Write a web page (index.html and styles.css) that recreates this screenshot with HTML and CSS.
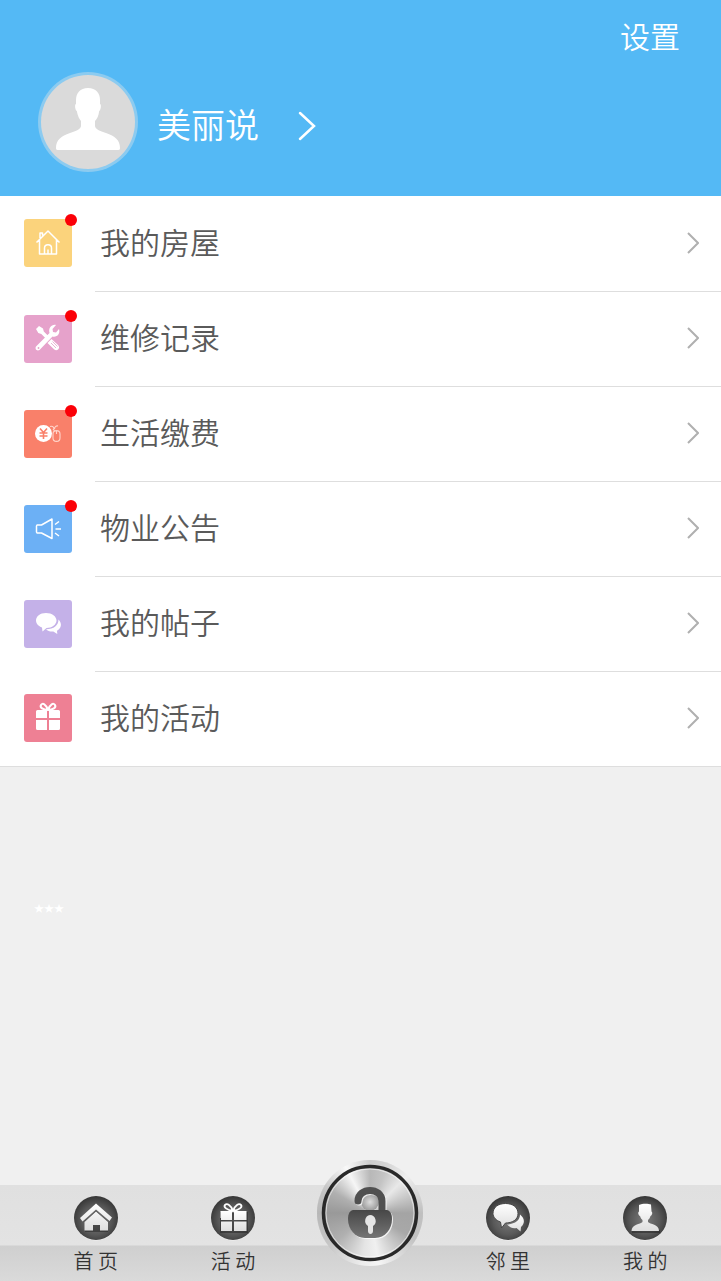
FILE: index.html
```html
<!DOCTYPE html>
<html lang="zh-CN">
<head>
<meta charset="UTF-8" />
<meta name="viewport" content="width=device-width, initial-scale=1" />
<title>我的</title>
<link rel="stylesheet" href="styles.css">
</head>
<body>
  <header class="header">
    <a class="settings" href="#settings">设置</a>
    <a class="profile" href="#profile">
      <svg class="avatar" viewBox="0 0 100 100" aria-hidden="true">
        <circle cx="50" cy="50" r="50" fill="#8ccbf0" />
        <circle cx="50" cy="50" r="47" fill="#dadada" />
        <path fill="#fff" d="M50 16c-8 0-12 5-12 12v4c-1.500 0-1 6 .8 7 1 5 2.500 8 4.200 10v5c0 3-5 5-11 7-9 3-14 7-14 15 0 2 1 2 3 2h58c2 0 3 0 3-2 0-8-5-12-14-15-6-2-11-4-11-7v-5c2-2 3.500-5 4.200-10 1.800-1 2.300-7 .8-7v-4c0-7-4-12-12-12z" />
      </svg>
      <span class="name">美丽说</span>
      <svg class="name-arrow" viewBox="0 0 18 30" aria-hidden="true"><path d="M2 2l14 13L2 28" /></svg>
    </a>
  </header>

  <main>
    <ul class="menu">
      <li>
        <a href="#house">
          <span class="icon yellow">
            <svg viewBox="0 0 48 48" aria-hidden="true"><path class="line" d="M12.500 23.500L24 12l11.500 11.500M15.500 21v14h17V21M16 19v-5h2.500v2.500M20.500 35v-6c0-4.500 7-4.500 7 0v6M24 34.500v-4" /></svg>
            <i class="dot"></i>
          </span>
          <span class="text">我的房屋</span>
          <svg class="arrow" viewBox="0 0 12 22" aria-hidden="true"><path d="M1 1l10 10L1 21" /></svg>
        </a>
      </li>
      <li>
        <a href="#repair">
          <span class="icon pink">
            <svg viewBox="0 0 48 48" aria-hidden="true">
              <path fill="#fff" d="M12 14l3-3 4 2.500.8 3 5 5-2.500 2.500-5-5-3-1z" />
              <path fill="#fff" d="M32 10l-3.500 4 .5 3 3 .5 3-3.500c1.500 5-2 8.500-6.500 7.500L15.500 35c-2.500 1.500-5-1-3.500-3.500L25.500 18C24 13.500 27.500 9 32 10z" />
              <path fill="#fff" d="M27.500 24l6.500 6c3 3-1 7-4 4.200l-6.500-6.200z" />
              <path stroke="#e6a2cb" d="M27 28l5 5M28.500 26.500l5 5" stroke-width=".8" />
              <circle cx="14.500" cy="33" r=".9" fill="#e6a2cb" />
            </svg>
            <i class="dot"></i>
          </span>
          <span class="text">维修记录</span>
          <svg class="arrow" viewBox="0 0 12 22" aria-hidden="true"><path d="M1 1l10 10L1 21" /></svg>
        </a>
      </li>
      <li>
        <a href="#payment">
          <span class="icon orange">
            <svg viewBox="0 0 48 48" aria-hidden="true">
              <circle cx="19.500" cy="23.500" r="8.500" fill="#fff" />
              <path d="M16 18.500l3.500 4 3.500-4M15.500 23h8M15.500 26h8M19.500 22.500v6.500" fill="none" stroke="#f9806a" stroke-width="1.600" />
              <path d="M26 16.500c3-1 4 1 4 3M30.500 19c0-2.500 2-3.500 3.500-3M29 24c0-4.500 7-4.500 7 0v4c0 4.500-7 4.500-7 0zM32.500 20.500v3.500M29 19l1.500 2" fill="none" stroke="#ffd5cc" stroke-width="1.100" />
            </svg>
            <i class="dot"></i>
          </span>
          <span class="text">生活缴费</span>
          <svg class="arrow" viewBox="0 0 12 22" aria-hidden="true"><path d="M1 1l10 10L1 21" /></svg>
        </a>
      </li>
      <li>
        <a href="#notice">
          <span class="icon blue">
            <svg viewBox="0 0 48 48" aria-hidden="true"><path class="line" d="M13 20h4.500L28 14v19.500L17.500 28H13l-.5-1v-6zM31 19.500l4-3M31.500 24H37M31 28l4 3" /></svg>
            <i class="dot"></i>
          </span>
          <span class="text">物业公告</span>
          <svg class="arrow" viewBox="0 0 12 22" aria-hidden="true"><path d="M1 1l10 10L1 21" /></svg>
        </a>
      </li>
      <li>
        <a href="#posts">
          <span class="icon purple">
            <svg viewBox="0 0 48 48" aria-hidden="true">
              <path fill="#fff" d="M34.500 19.500c4 4 2.800 9-1.500 11.200l.3 3.300-4-2.500c-3 .3-5.500-.5-7.300-2.300 8 0 12.500-4 12.500-9.700z" />
              <path fill="#fff" d="M22 13c6 0 10.500 3.500 10.500 7.500S28 28 22.500 28l-4 3.500-.5-4c-3.500-1.200-6-4-6-7C12 16.500 16 13 22 13z" />
            </svg>
          </span>
          <span class="text">我的帖子</span>
          <svg class="arrow" viewBox="0 0 12 22" aria-hidden="true"><path d="M1 1l10 10L1 21" /></svg>
        </a>
      </li>
      <li>
        <a href="#activity">
          <span class="icon red">
            <svg viewBox="0 0 48 48" aria-hidden="true">
              <path fill="#fff" d="M13.500 16H23v8H12v-6.500q0-1.500 1.500-1.500zM25 16h9.500q1.500 0 1.500 1.500V24H25zM12 26h11v10h-9.500q-1.500 0-1.500-1.500zM25 26h11v8.500q0 1.500-1.500 1.500H25z" />
              <path fill="none" stroke="#fff" stroke-width="2" d="M24 16c-2-6-5.500-7.500-7-5s2 5 7 5zM24 16c2-6 5.500-7.500 7-5s-2 5-7 5z" />
            </svg>
          </span>
          <span class="text">我的活动</span>
          <svg class="arrow" viewBox="0 0 12 22" aria-hidden="true"><path d="M1 1l10 10L1 21" /></svg>
        </a>
      </li>
    </ul>
    <p class="stars">★★★</p>
  </main>

  <svg class="defs" width="0" height="0" aria-hidden="true">
    <defs>
      <radialGradient id="disc" cx=".5" cy=".55" r=".55">
        <stop offset="0" stop-color="#7b7b7b" />
        <stop offset=".6" stop-color="#595959" />
        <stop offset="1" stop-color="#353535" />
      </radialGradient>
      <linearGradient id="glyph" x1="0" y1="0" x2="0" y2="1">
        <stop offset="0" stop-color="#fff" />
        <stop offset="1" stop-color="#dedede" />
      </linearGradient>
      <linearGradient id="lock" x1="0" y1="0" x2="0" y2="1">
        <stop offset="0" stop-color="#474747" />
        <stop offset="1" stop-color="#757575" />
      </linearGradient>
      <radialGradient id="hole" cx=".5" cy=".5" r=".5">
        <stop offset="0" stop-color="#ddd" />
        <stop offset="1" stop-color="#999" />
      </radialGradient>
    </defs>
  </svg>

  <nav class="tabbar">
    <a class="tab" href="#home">
      <svg viewBox="0 0 46 46" aria-hidden="true">
        <circle cx="23" cy="23.500" r="22" fill="#f6f6f6" />
        <circle cx="23" cy="23" r="22" fill="url(#disc)" />
        <path fill="#222" d="M12 37V26l11-10 12 11v10z" opacity=".5" />
        <path fill="url(#glyph)" d="M23 8.500L39 22.500 36.500 26 23 14.500 9.500 26.500 7 23zM23 16.500l12 10.500v8.500h-8V30h-7v5.500h-8.500V27z" />
      </svg>
      <span>首 页</span>
    </a>
    <a class="tab" href="#events">
      <svg viewBox="0 0 46 46" aria-hidden="true">
        <circle cx="23" cy="23.500" r="22" fill="#f6f6f6" />
        <circle cx="23" cy="23" r="22" fill="url(#disc)" />
        <path fill="#222" opacity=".5" d="M10 17h28v21H10z" />
        <path fill="url(#glyph)" d="M10.500 16H22v9H11v-2h-.5zM24 16h12.500v9H24zM11 26.500h11v9.500H11zM24 26.500h12.500V36H24z" />
        <path fill="none" stroke="#fff" stroke-width="1.800" d="M23 16c-2-6-6-8-8-6s2 5 8 6zM23 16c2-6 6-8 8-6s-2 5-8 6z" />
      </svg>
      <span>活 动</span>
    </a>
    <div class="tab">
      <button class="unlock" type="button" aria-label="开门">
        <svg viewBox="0 0 106 106" aria-hidden="true">
          <circle cx="53" cy="53" r="50" fill="none" stroke="#fff" stroke-width="6" opacity=".3" />
          <circle cx="53" cy="53" r="46.500" fill="none" stroke="#292929" stroke-width="3.500" />
          <circle cx="53" cy="53" r="44" fill="none" stroke="#fff" stroke-width="1" opacity=".6" />
          <circle cx="53" cy="42" r="9" fill="url(#hole)" />
          <g transform="translate(1 1)" opacity=".8">
            <path fill="none" stroke="#fff" stroke-width="7" stroke-linecap="round" d="M41 41c0-14 24-14 24 0v10" />
            <path fill="#fff" d="M36 50h34c4 1 5 5 5 9 0 10-7 19-17 19H48c-10 0-17-9-17-19 0-4 1-8 5-9z" />
          </g>
          <path fill="none" stroke="#505050" stroke-width="7" stroke-linecap="round" d="M41 41c0-14 24-14 24 0v10" />
          <path fill="url(#lock)" d="M36 50h34c4 1 5 5 5 9 0 10-7 19-17 19H48c-10 0-17-9-17-19 0-4 1-8 5-9z" />
          <path fill="#e5e5e5" d="M53 55a6 6 0 0 1 3 11v5c0 4-5 4-5 0v-5a6 6 0 0 1 2-11z" />
        </svg>
      </button>
    </div>
    <a class="tab" href="#neighbors">
      <svg viewBox="0 0 46 46" aria-hidden="true">
        <circle cx="23" cy="23.500" r="22" fill="#f6f6f6" />
        <circle cx="23" cy="23" r="22" fill="url(#disc)" />
        <path fill="url(#glyph)" d="M35 19.500c5 4 5 9 1 12.500l-.5 4.500-4-3.500c-4 1-7-1-9.500-3.500 8-.5 13-4 13-10z" />
        <path fill="url(#glyph)" stroke="#484848" stroke-width="1" d="M20.500 8.500c7 0 12.500 3.500 12.500 10S27 28 20.500 28l-4 5-1-6C11 25.500 8 22 8 18.500c0-6.500 5.500-10 12.500-10z" />
      </svg>
      <span>邻 里</span>
    </a>
    <a class="tab" href="#mine">
      <svg viewBox="0 0 46 46" aria-hidden="true">
        <circle cx="23" cy="23.500" r="22" fill="#f6f6f6" />
        <circle cx="23" cy="23" r="22" fill="url(#disc)" />
        <path fill="#222" opacity=".5" d="M10 35h28v3H10z" />
        <path fill="url(#glyph)" d="M17 10c3-1.500 9-1.500 12-.5l.5 7c1.500 1 .5 4-1 4.500-.5 2-1.500 3-2.500 4v2c2 2.500 11 2 11 9H9.500c0-7 9-6.500 11-9v-2c-1-1-2-2-2.500-4-1.500-.5-2.500-3.500-1-4.500z" />
      </svg>
      <span>我 的</span>
    </a>
  </nav>
</body>
</html>
```
FILE: styles.css
```css
* {
  box-sizing: border-box;
}
body {
  margin: 0;
  min-height: 100vh;
  display: flex;
  flex-direction: column;
  font-family: "Noto Sans CJK SC", sans-serif;
  font-weight: 350;
  background: #f0f0f0;
  color: #5a5a5a;
}
a {
  color: inherit;
  text-decoration: none;
}
.header {
  display: flex;
  flex-direction: column;
  padding: 15px 41px 24px 38px;
  background: #54b9f5;
  color: #fff;
}
.settings {
  align-self: flex-end;
  font-size: 30px;
  line-height: 40px;
}
.profile {
  align-self: flex-start;
  display: flex;
  align-items: center;
  margin-top: 17px;
}
.avatar {
  width: 100px;
  height: 100px;
}
.name {
  margin-left: 19px;
  padding-top: 4px;
  font-size: 34px;
  line-height: 48px;
}
.name-arrow {
  width: 18px;
  height: 30px;
  margin: 8px 0 0 39px;
}
.name-arrow path {
  fill: none;
  stroke: #fff;
  stroke-width: 2.5;
  stroke-linecap: round;
}
main {
  flex: 1;
}
.menu {
  list-style: none;
  margin: 0;
  padding: 0;
  background: #fff;
  border-bottom: 1px solid #dedede;
}
.menu a {
  display: flex;
  align-items: center;
  height: 95px;
  padding: 0 22px 0 24px;
  background: linear-gradient(#dedede, #dedede) 95px 100% / 100% 1px no-repeat;
}
.menu li:first-child a {
  height: 96px;
}
.menu li:last-child a {
  height: 94px;
  background: none;
}
.icon {
  position: relative;
  width: 48px;
  height: 48px;
  margin-bottom: 2px;
  border-radius: 3px;
}
.icon svg {
  display: block;
}
.icon .line {
  fill: none;
  stroke: #fff;
  stroke-width: 1.5;
  stroke-linejoin: round;
}
.yellow { background: #fbd37c; }
.pink { background: #e6a2cb; }
.orange { background: #f9806a; }
.blue { background: #6cb0f5; }
.purple { background: #c4b1e8; }
.red { background: #ee8094; }
.dot {
  position: absolute;
  top: -5px;
  right: -5px;
  width: 12px;
  height: 12px;
  border-radius: 50%;
  background: #fb0007;
}
.text {
  flex: 1;
  margin-left: 28px;
  padding-bottom: 7px;
  font-size: 30px;
  line-height: 44px;
}
.arrow {
  width: 12px;
  height: 22px;
  margin-bottom: 3px;
}
.arrow path {
  fill: none;
  stroke: #b0b0b0;
  stroke-width: 2;
}
.stars {
  margin: 134px 0 0 34px;
  font-family: "DejaVu Sans", sans-serif;
  font-size: 10px;
  line-height: 16px;
  color: #fff;
}
.defs {
  position: absolute;
}
.tabbar {
  display: grid;
  grid-template-columns: repeat(5, 1fr);
  height: 96px;
  padding: 0 7px 0 27px;
  background: linear-gradient(#e0e0e0, #e3e3e3 60px, #cfcfcf 61px, #dadada);
  color: #333;
}
.tab {
  display: flex;
  flex-direction: column;
  align-items: center;
  padding-top: 10px;
  font-size: 20px;
  line-height: 28px;
}
.tab > svg {
  width: 46px;
  height: 46px;
  margin-bottom: 6px;
}
.unlock {
  width: 106px;
  height: 106px;
  margin-top: -35px;
  padding: 0;
  border: 0;
  border-radius: 50%;
  cursor: pointer;
  background: conic-gradient(#b8b8b8, #c4c4c4 20deg, #e8e8e8 45deg, #a4a4a4 90deg, #a8a8a8 120deg, #f0f0f0 170deg, #e4e4e4 190deg, #b0b0b0 230deg, #999 270deg, #b0b0b0 300deg, #f6f6f6 332deg, #b8b8b8);
}
.unlock svg {
  display: block;
}
```
